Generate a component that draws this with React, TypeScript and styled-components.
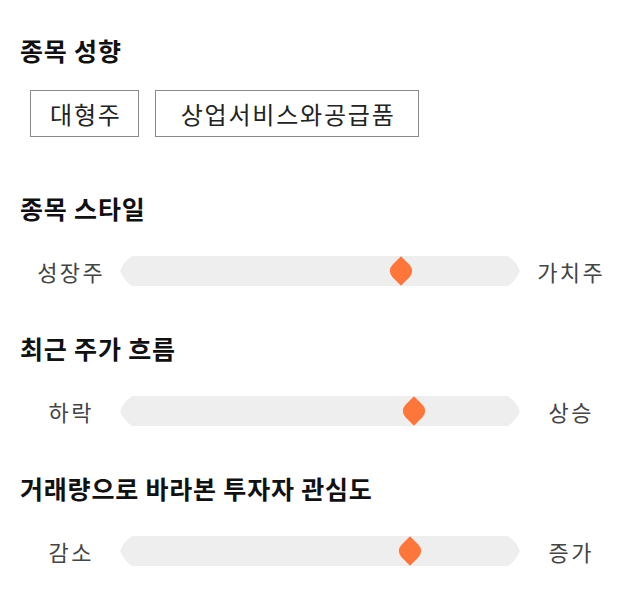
import React from "react";
import styled, { createGlobalStyle } from "styled-components";

const Global = createGlobalStyle`
  html, body { margin: 0; padding: 0; background: #ffffff; }
  body { font-family: "Noto Sans CJK KR", "Noto Sans", sans-serif; color: #111; }
`;

const Page = styled.div`
  width: 640px;
  box-sizing: border-box;
  padding: 35px 20px 20px;
  display: flex;
  flex-direction: column;
`;

const Section = styled.section<{ $gap: number }>`
  display: flex;
  flex-direction: column;
  margin-top: ${(p) => p.$gap}px;
`;

const Heading = styled.h2`
  margin: 0;
  font-size: 25px;
  line-height: 30px;
  font-weight: 700;
  color: #111;
  letter-spacing: 0.8px;
`;

const TagRow = styled.div`
  display: flex;
  gap: 16px;
  margin-top: 25px;
  padding-left: 10px;
`;

const Tag = styled.div<{ $pad: number }>`
  box-sizing: border-box;
  height: 47px;
  padding: 0 ${(p) => p.$pad - 3}px 0 ${(p) => p.$pad}px;
  border: 1px solid #8a8a8a;
  display: flex;
  align-items: center;
  font-size: 24px;
  letter-spacing: 1.8px;
  color: #222;
`;

const SliderRow = styled.div`
  display: grid;
  grid-template-columns: 100px 1fr 100px;
  align-items: center;
  height: 30px;
  margin-top: 33px;
`;

const SideLabel = styled.span`
  text-align: center;
  font-size: 22px;
  letter-spacing: 2.5px;
  text-indent: 2.5px;
  color: #444;
  line-height: 30px;
`;

const Track = styled.div`
  position: relative;
  height: 30px;
  background: #eeeeee;
  clip-path: polygon(
    12px 0,
    calc(100% - 12px) 0,
    calc(100% - 7px) 4px,
    calc(100% - 3px) 9px,
    100% 15px,
    calc(100% - 3px) 21px,
    calc(100% - 7px) 26px,
    calc(100% - 12px) 30px,
    12px 30px,
    7px 26px,
    3px 21px,
    0 15px,
    3px 9px,
    7px 4px
  );
`;

const Thumb = styled.div`
  position: absolute;
  top: 50%;
  width: 21px;
  height: 21px;
  background: #ff763b;
  border-radius: 0 9px 0 9px;
  transform: translate(-50%, -50%) rotate(45deg);
`;

type SliderData = { title: string; left: string; right: string; value: number };

const sliders: SliderData[] = [
  { title: "종목 스타일", left: "성장주", right: "가치주", value: 70.25 },
  { title: "최근 주가 흐름", left: "하락", right: "상승", value: 73.5 },
  { title: "거래량으로 바라본 투자자 관심도", left: "감소", right: "증가", value: 72.5 },
];

export default function App() {
  return (
    <>
      <Global />
      <Page>
        <Section $gap={0}>
          <Heading>종목 성향</Heading>
          <TagRow>
            <Tag $pad={19}>대형주</Tag>
            <Tag $pad={25}>상업서비스와공급품</Tag>
          </TagRow>
        </Section>
        {sliders.map((s, i) => (
          <Section key={s.title} $gap={i === 0 ? 56 : 47}>
            <Heading>{s.title}</Heading>
            <SliderRow>
              <SideLabel>{s.left}</SideLabel>
              <Track role="slider" aria-valuenow={s.value}>
                <Thumb style={{ left: `${s.value}%` }} />
              </Track>
              <SideLabel>{s.right}</SideLabel>
            </SliderRow>
          </Section>
        ))}
      </Page>
    </>
  );
}
